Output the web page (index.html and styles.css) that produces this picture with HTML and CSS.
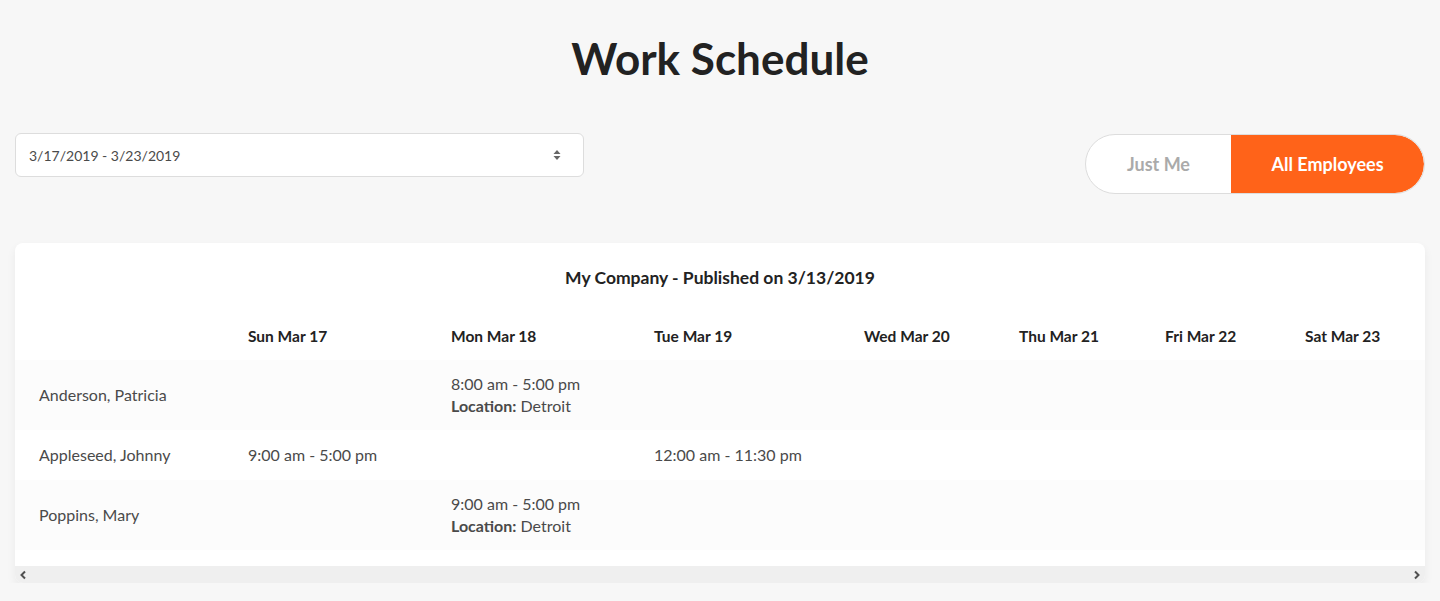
FILE: index.html
```html
<!DOCTYPE html>
<html lang="en">
<head>
    <meta charset="UTF-8">
    <meta name="viewport" content="width=device-width, initial-scale=1.0">
    <title>Work Schedule</title>
    <link rel="stylesheet" href="styles.css">
</head>
<body>

<div class="page">
    <h1>Work Schedule</h1>

    <div class="toolbar">
        <div class="week-select">
            <span>3/17/2019 - 3/23/2019</span>
            <svg class="caret" width="8" height="12" viewBox="0 0 8 12">
                <path d="M4 1 L7.5 5 H0.5 Z M4 11 L7.5 7 H0.5 Z" fill="#666"/>
            </svg>
        </div>
        <div class="toggle">
            <div class="toggle-option">Just Me</div>
            <div class="toggle-option active">All Employees</div>
        </div>
    </div>

    <div class="card">
        <div class="card-title">My Company - Published on 3/13/2019</div>
        <div class="table-wrap">
            <table class="schedule">
                <colgroup>
                    <col style="width: 209px">
                    <col style="width: 203px">
                    <col style="width: 203px">
                    <col style="width: 210px">
                    <col style="width: 155px">
                    <col style="width: 146px">
                    <col style="width: 140px">
                    <col style="width: 160px">
                </colgroup>
                <thead>
                    <tr>
                        <th></th>
                        <th>Sun Mar 17</th>
                        <th>Mon Mar 18</th>
                        <th>Tue Mar 19</th>
                        <th>Wed Mar 20</th>
                        <th>Thu Mar 21</th>
                        <th>Fri Mar 22</th>
                        <th>Sat Mar 23</th>
                    </tr>
                </thead>
                <tbody>
                    <tr class="tall">
                        <td>Anderson, Patricia</td>
                        <td></td>
                        <td>8:00 am - 5:00 pm<br><b>Location:</b> Detroit</td>
                        <td></td>
                        <td></td>
                        <td></td>
                        <td></td>
                        <td></td>
                    </tr>
                    <tr>
                        <td>Appleseed, Johnny</td>
                        <td>9:00 am - 5:00 pm</td>
                        <td></td>
                        <td>12:00 am - 11:30 pm</td>
                        <td></td>
                        <td></td>
                        <td></td>
                        <td></td>
                    </tr>
                    <tr class="tall">
                        <td>Poppins, Mary</td>
                        <td></td>
                        <td>9:00 am - 5:00 pm<br><b>Location:</b> Detroit</td>
                        <td></td>
                        <td></td>
                        <td></td>
                        <td></td>
                        <td></td>
                    </tr>
                </tbody>
            </table>
        </div>
        <div class="scrollbar">
            <svg width="8" height="10" viewBox="0 0 8 10">
                <path d="M6 1.5 L2.5 5 L6 8.5" fill="none" stroke="#505050" stroke-width="2"/>
            </svg>
            <svg width="8" height="10" viewBox="0 0 8 10">
                <path d="M2 1.5 L5.5 5 L2 8.5" fill="none" stroke="#505050" stroke-width="2"/>
            </svg>
        </div>
    </div>
</div>

</body>
</html>
```

FILE: styles.css
```css
body {
    font-family: Lato, "Open Sans", sans-serif;
    background: #f7f7f7;
    margin: 0;
    color: #4a4a4a;
}
.page {
    padding: 0 15px;
}
h1 {
    margin: 0;
    padding-top: 33px;
    height: 67px;
    text-align: center;
    font-size: 44px;
    font-weight: 700;
    color: #222;
    line-height: 50px;
}
.toolbar {
    display: flex;
    justify-content: space-between;
    align-items: flex-start;
    margin-top: 33px;
}
.week-select {
    width: 569px;
    height: 44px;
    box-sizing: border-box;
    background: #fff;
    border: 1px solid #ddd;
    border-radius: 6px;
    display: flex;
    align-items: center;
    justify-content: space-between;
    padding: 0 22px 0 13px;
    font-size: 14px;
    color: #4a4a4a;
}
.toggle {
    display: flex;
    height: 60px;
    width: 340px;
    box-sizing: border-box;
    margin-top: 1px;
    background: #fff;
    border: 1px solid #ddd;
    border-radius: 30px;
    overflow: hidden;
    font-size: 18px;
    font-weight: 700;
}
.toggle-option {
    display: flex;
    align-items: center;
    justify-content: center;
    width: 145px;
    color: #aaa;
}
.toggle-option.active {
    flex: 1;
    background: #ff6319;
    color: #fff;
    border-radius: 0 30px 30px 0;
}
.card {
    margin-top: 49px;
    background: #fff;
    border-radius: 8px;
    box-shadow: 0 4px 10px rgba(0, 0, 0, 0.06);
    overflow: hidden;
}
.card-title {
    text-align: center;
    font-size: 17.5px;
    font-weight: 700;
    color: #222;
    padding-top: 24px;
    line-height: 22px;
    height: 45px;
}
.table-wrap {
    overflow: hidden;
    padding-bottom: 16px;
}
.schedule {
    border-collapse: collapse;
    table-layout: fixed;
    width: 1426px;
    font-size: 16px;
}
.schedule th {
    text-align: left;
    font-size: 15.5px;
    font-weight: 700;
    color: #222;
    height: 48px;
    padding: 0 0 0 24px;
}
.schedule td {
    height: 50px;
    padding: 0 0 0 24px;
    line-height: 22px;
    vertical-align: middle;
}
.schedule tr.tall td {
    height: 70px;
}
.schedule tbody tr:nth-child(odd) {
    background: #fcfcfc;
}
.schedule td b {
    color: #4a4a4a;
}
.scrollbar {
    display: flex;
    justify-content: space-between;
    align-items: center;
    height: 17px;
    background: #efefef;
    padding: 0 4px;
}
```
